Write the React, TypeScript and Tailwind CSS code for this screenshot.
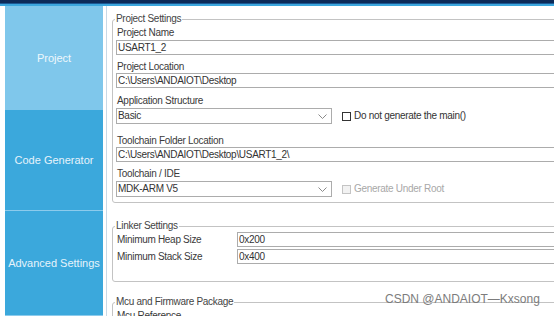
import type { ReactNode } from "react";

const font = "font-['Liberation_Sans',Arial,sans-serif]";

function Label({ children, className = "" }: { children: ReactNode; className?: string }) {
  return <div className={`h-[12px] pl-[1px] text-[10px] leading-[12px] tracking-[-0.3px] text-[#3a3a3a] ${className}`}>{children}</div>;
}

function TextBox({ value, className = "" }: { value: string; className?: string }) {
  return (
    <input
      readOnly
      value={value}
      className={`block h-[15px] w-full border border-[#acacac] bg-white px-[1px] text-[10px] leading-[13px] tracking-[-0.3px] text-[#333] outline-none ${className}`}
    />
  );
}

function Select({ value }: { value: string }) {
  return (
    <div className="flex h-[16px] w-[216px] shrink-0 items-center justify-between border border-[#acacac] bg-white pl-[1px] pr-[4px] text-[10px] leading-[14px] tracking-[-0.3px] text-[#333]">
      <span>{value}</span>
      <svg width="9" height="5" viewBox="0 0 9 5" fill="none">
        <path d="M0.5 0.5 L4.5 4.5 L8.5 0.5" stroke="#8a8a8a" strokeWidth="1" />
      </svg>
    </div>
  );
}

function Check({ label, disabled }: { label: string; disabled?: boolean }) {
  return (
    <div className={`ml-[10px] flex items-center gap-[3px] text-[10px] leading-[12px] tracking-[-0.3px] ${disabled ? "text-[#a8a8a8]" : "text-[#333]"}`}>
      <span className={`h-[9px] w-[9px] border ${disabled ? "border-[#c4c4c4] bg-[#f2f2f2]" : "border-[#333] bg-white"}`} />
      <span>{label}</span>
    </div>
  );
}

function Group({ title, className = "", children }: { title: string; className?: string; children: ReactNode }) {
  return (
    <fieldset className={`w-[520px] rounded-[3px] border border-[#c3c3c3] px-[3px] ${className}`}>
      <legend className="ml-[-1px] px-[1px] text-[10px] leading-[12px] tracking-[-0.3px] text-[#444]">{title}</legend>
      {children}
    </fieldset>
  );
}

function NavItem({ label, className }: { label: string; className: string }) {
  return <div className={`flex items-center justify-center whitespace-nowrap text-[11px] ${className}`}>{label}</div>;
}

export default function App() {
  return (
    <div className={`relative flex h-[316px] w-[554px] flex-col overflow-hidden bg-white ${font}`}>
      <div className="h-[3px] shrink-0 bg-[#0c2a58]" />
      <div className="h-[1px] shrink-0 bg-[#1b5892]" />
      <div className="h-[2px] shrink-0 bg-[#3ba6dd]" />

      <div className="flex min-h-0 flex-1">
        <div className="flex w-[103px] shrink-0 flex-col pl-[5px]">
          <NavItem label="Project" className="h-[104px] bg-[#7fc7eb] text-[#eef7fc]" />
          <NavItem label="Code Generator" className="h-[100px] bg-[#3ba8dc] text-[#e6f3fb]" />
          <div className="h-[1px] bg-[#8ccbec]" />
          <NavItem label="Advanced Settings" className="h-[104px] bg-[#3ba8dc] text-[#e6f3fb]" />
          <div className="h-[1px] bg-[#8ccbec]" />
        </div>

        <div className="ml-[3px] min-w-0 flex-1 overflow-hidden border-l border-[#c9d9e6] pl-[5px] pt-[7px]">
          <Group title="Project Settings" className="pb-[5px]">
            <Label className="mt-[2px]">Project Name</Label>
            <TextBox value="USART1_2" className="mt-[1px]" />
            <Label className="mt-[6px]">Project Location</Label>
            <TextBox value="C:\Users\ANDAIOT\Desktop" />
            <Label className="mt-[7px]">Application Structure</Label>
            <div className="mt-[1px] flex items-center">
              <Select value="Basic" />
              <Check label="Do not generate the main()" />
            </div>
            <Label className="mt-[11px]">Toolchain Folder Location</Label>
            <TextBox value="C:\Users\ANDAIOT\Desktop\USART1_2\" />
            <Label className="mt-[6px]">Toolchain / IDE</Label>
            <div className="mt-[1px] flex items-center">
              <Select value="MDK-ARM V5" />
              <Check label="Generate Under Root" disabled />
            </div>
          </Group>

          <Group title="Linker Settings" className="mt-[17px] pb-[17px]">
            <div className="flex h-[15px] items-center">
              <Label className="w-[121px] shrink-0">Minimum Heap Size</Label>
              <TextBox value="0x200" className="w-[57px]" />
            </div>
            <div className="mt-[2px] flex h-[15px] items-center">
              <Label className="w-[121px] shrink-0">Minimum Stack Size</Label>
              <TextBox value="0x400" className="w-[57px]" />
            </div>
          </Group>

          <Group title="Mcu and Firmware Package" className="mt-[14px] pb-[20px]">
            <Label className="mt-[2px]">Mcu Reference</Label>
          </Group>
        </div>
      </div>

      <div className="absolute left-[385px] top-[292px] text-[12px] leading-[14px] text-[#7c7c7c]">
        CSDN @ANDAIOT—Kxsong
      </div>
    </div>
  );
}
